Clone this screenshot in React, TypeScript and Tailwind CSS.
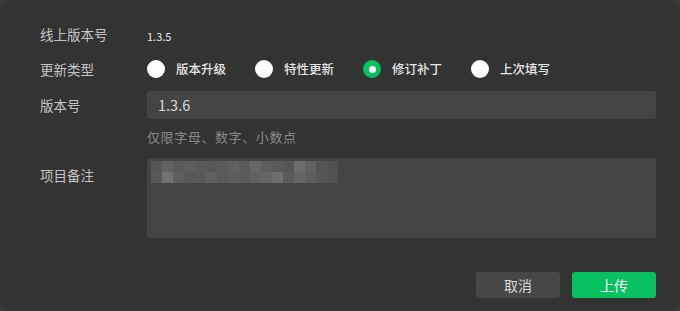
import React from 'react';

const options = ['版本升级', '特性更新', '修订补丁', '上次填写'];
const selected = 2;

// blurred remark text, two rows of mosaic cells
const mosaic = [
  ['bg-[#555555]', 'bg-[#626262]', 'bg-[#5a5a5a]', 'bg-[#5e5e5e]', 'bg-[#595959]', 'bg-[#575757]', 'bg-[#5b5b5b]', 'bg-[#606060]', 'bg-[#5a5a5a]', 'bg-[#686868]', 'bg-[#5d5d5d]', 'bg-[#5a5a5a]', 'bg-[#555555]', 'bg-[#6d6d6d]', 'bg-[#626262]', 'bg-[#555555]', 'bg-[#505050]'],
  ['bg-[#585858]', 'bg-[#717171]', 'bg-[#5e5e5e]', 'bg-[#575757]', 'bg-[#585858]', 'bg-[#606060]', 'bg-[#5a5a5a]', 'bg-[#5d5d5d]', 'bg-[#5b5b5b]', 'bg-[#616161]', 'bg-[#656565]', 'bg-[#6e6e6e]', 'bg-[#5a5a5a]', 'bg-[#666666]', 'bg-[#5d5d5d]', 'bg-[#565656]', 'bg-[#525252]'],
];

function Row({ label, children, className = '' }: { label: string; children: React.ReactNode; className?: string }) {
  return (
    <div className={`flex ${className}`}>
      <div className="w-[107px] shrink-0 text-[13.5px] leading-5 text-[#c4c4c4]">{label}</div>
      <div className="flex-1">{children}</div>
    </div>
  );
}

export default function App() {
  return (
    <div className="w-[680px] h-[311px] bg-[#3a3a3a] overflow-hidden" style={{ fontFamily: '"Noto Sans CJK SC", "Noto Sans", sans-serif' }}>
      <div className="w-full h-full bg-[#333333] rounded-[13px] pl-[40px] pr-[24px] pt-[24px]">
        <Row label="线上版本号" className="h-5 items-center">
          <span className="text-[11px] leading-5 text-[#e8e8e8]">1.3.5</span>
        </Row>

        <Row label="更新类型" className="mt-[15px] h-5 items-center">
          <div className="flex items-center h-5">
            {options.map((o, i) => (
              <label key={o} className="flex items-center w-[108px]">
                {i === selected ? (
                  <span className="w-[18px] h-[18px] rounded-full bg-[#07c160] flex items-center justify-center">
                    <span className="w-[7px] h-[7px] rounded-full bg-white" />
                  </span>
                ) : (
                  <span className="w-[18px] h-[18px] rounded-full bg-white" />
                )}
                <span className="ml-[11px] text-[12.5px] leading-5 font-medium text-[#e6e6e6]">{o}</span>
              </label>
            ))}
          </div>
        </Row>

        <Row label="版本号" className="mt-[12px] items-center">
          <div className="h-[28px] bg-[#444444] rounded-[3px] flex items-center pl-[11px] text-[14.5px] text-[#dddddd]">1.3.6</div>
        </Row>

        <Row label="" className="mt-[8px]">
          <div className="text-[13px] leading-5 h-5 text-[#8a8a8a] tracking-[0.6px]">仅限字母、数字、小数点</div>
        </Row>

        <Row label="项目备注" className="mt-[11px] items-start [&>div:first-child]:pt-[7px]">
          <div className="h-[80px] bg-[#444444] rounded-[3px] relative">
            <div className="absolute left-[4px] top-[3px] flex flex-col">
              {mosaic.map((r, ri) => (
                <div key={ri} className="flex">
                  {r.map((c, ci) => (
                    <div key={ci} className={`w-[11px] h-[11px] ${c}`} />
                  ))}
                </div>
              ))}
            </div>
          </div>
        </Row>

        <div className="mt-[34px] flex justify-end gap-[12px]">
          <button className="w-[84px] h-[26px] rounded-[3px] bg-[#474747] text-[14px] text-[#d8d8d8]">取消</button>
          <button className="w-[84px] h-[26px] rounded-[3px] bg-[#07c160] text-[14px] text-white">上传</button>
        </div>
      </div>
    </div>
  );
}
